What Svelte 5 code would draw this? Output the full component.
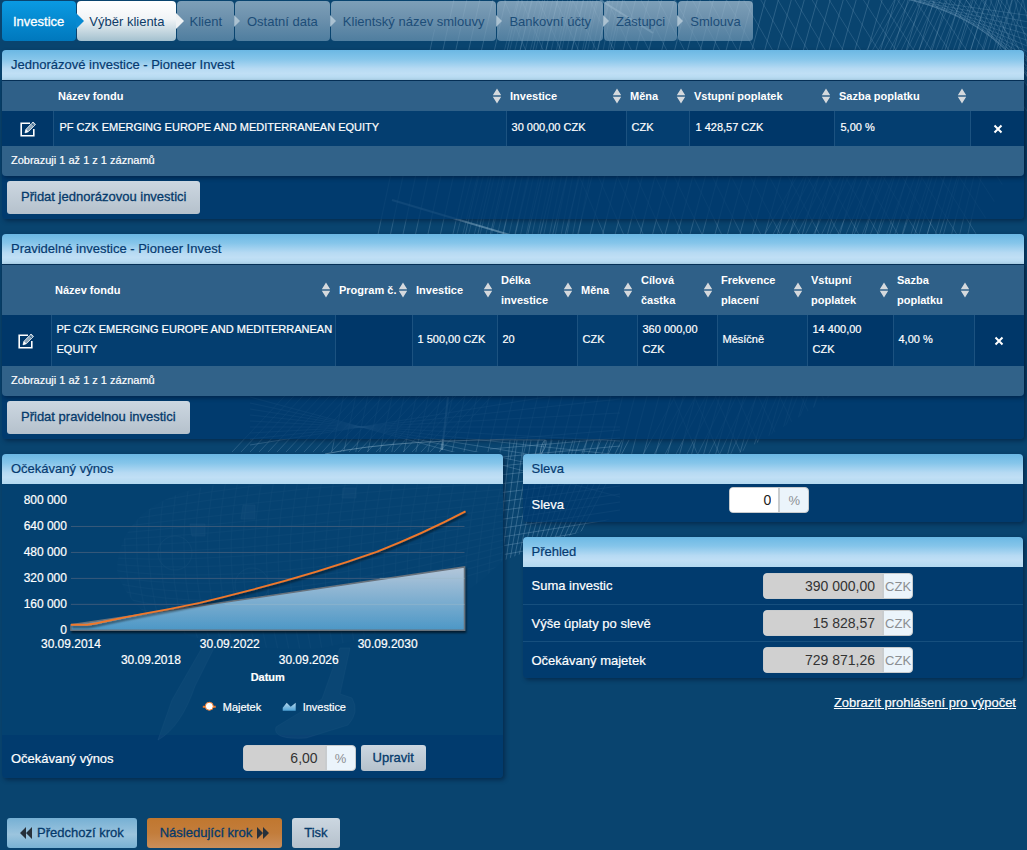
<script>
  const steps = [
    { label: 'Investice', state: 'current' },
    { label: 'Výběr klienta', state: 'next' },
    { label: 'Klient', state: 'idle' },
    { label: 'Ostatní data', state: 'idle' },
    { label: 'Klientský název smlouvy', state: 'idle' },
    { label: 'Bankovní účty', state: 'idle' },
    { label: 'Zástupci', state: 'idle' },
    { label: 'Smlouva', state: 'idle' }
  ];

  const tables = [
    {
      title: 'Jednorázové investice - Pioneer Invest',
      add: 'Přidat jednorázovou investici',
      widths: [52, 452, 120, 64, 145, 136, 53],
      heads: ['Název fondu', 'Investice', 'Měna', 'Vstupní poplatek', 'Sazba poplatku'],
      cells: ['PF CZK EMERGING EUROPE AND MEDITERRANEAN EQUITY', '30 000,00 CZK', 'CZK', '1 428,57 CZK', '5,00 %'],
      tall: false
    },
    {
      title: 'Pravidelné investice - Pioneer Invest',
      add: 'Přidat pravidelnou investici',
      widths: [49, 284, 77, 85, 80, 60, 80, 90, 86, 81, 50],
      heads: ['Název fondu', 'Program č.', 'Investice', 'Délka investice', 'Měna', 'Cílová častka', 'Frekvence placení', 'Vstupní poplatek', 'Sazba poplatku'],
      cells: ['PF CZK EMERGING EUROPE AND MEDITERRANEAN EQUITY', '', '1 500,00 CZK', '20', 'CZK', '360 000,00\nCZK', 'Měsíčně', '14 400,00\nCZK', '4,00 %'],
      tall: true
    }
  ];

  const summary = [
    { id: 'sum', label: 'Suma investic', value: '390 000,00' },
    { id: 'fee', label: 'Výše úplaty po slevě', value: '15 828,57' },
    { id: 'wealth', label: 'Očekávaný majetek', value: '729 871,26' }
  ];

  const yTicks = ['800 000', '640 000', '480 000', '320 000', '160 000', '0'];
  const xTicks = [
    [71, 648, '30.09.2014'],
    [151, 664, '30.09.2018'],
    [230, 648, '30.09.2022'],
    [309, 664, '30.09.2026'],
    [388, 648, '30.09.2030']
  ];

  // Wireframe decoration behind the panels
  const line = (a, b, c, d) => `M${a} ${b}L${c} ${d}`;
  const fan = (n, f) => Array.from({ length: n }, (_, i) => f(i)).join('');
  const steep = fan(46, (i) => line(430 + i * 13, -10, 330 + i * 12, 460));
  const falling = fan(34, (i) => line(500 + i * 17, -10, 700 + i * 22, 460));
  const sweep = fan(26, (i) => line(900 + i * 5, -10, 640 + i * 11, 460));
  const dense = fan(22, (i) => line(520 + i * 5, -10, 440 + i * 6, 300));
  const rightFan = fan(22, (i) => line(850 + i * 9, -10, 1060, 20 + i * 8));
  const lower = fan(24, (i) => line(300 + i * 9, 380, 215 + i * 9, 470));
  const lowerFlat = fan(9, (i) => line(250, 445 - i * 6, 620, 385 + i * 14));
  const cowl = fan(18, (i) => line(510 + i * 7, 440, 498 + i * 4, 560)) +
    fan(14, (i) => line(490, 440 + i * 9, 620, 430 + i * 8));
  const ribs = fan(34, (i) => `M${120 + i * 12} 470Q${100 + i * 12} 560 ${135 + i * 11} 650`) +
    fan(16, (i) => `M110 ${600 - i * 6}Q${240 + i * 4} ${650 - i * 12} 520 ${560 - i * 6}`);
</script>

{#snippet editIcon()}
  <svg width="18" height="18" viewBox="0 0 18 18" aria-hidden="true">
    <path d="M11 3.200H2.200V15.800H14.800V9" fill="none" stroke="#fff" stroke-width="1.600" />
    <path d="M6 12.800l1-3.500 7-7.300 2.500 2.400-7.100 7.300z" fill="#8fa8bc" stroke="#e4ebf0" stroke-width=".9" />
    <path d="M6 12.800l1-3.500 2.400 2.400z" fill="#fff" />
    <path d="M12.600 3.400l2.500 2.400" stroke="#073f70" stroke-width=".9" />
  </svg>
{/snippet}

{#snippet sortIcon()}
  <svg class="sort" width="10" height="16" viewBox="0 0 10 16" aria-hidden="true">
    <path d="M5 .500l4.200 6.700H.8zM5 15.500L.8 8.800h8.400z" fill="#d5d9dd" />
  </svg>
{/snippet}

<div class="page">
  <svg class="wire" viewBox="0 0 1027 850" preserveAspectRatio="xMidYMin slice" aria-hidden="true">
    <defs>
      <clipPath id="hull"><path d="M450 0H1027V110Q995 260 830 396Q740 460 590 528L505 560L500 452H225Q245 400 330 230Z" /></clipPath>
      <clipPath id="body"><path d="M117 570Q120 490 250 480H503V560Q440 625 320 648Q140 655 117 570Z" /></clipPath>
    </defs>
    <g clip-path="url(#hull)" fill="none" stroke="#8db4cf" stroke-width=".7">
      <path d={steep} opacity=".38" />
      <path d={falling} opacity=".3" />
      <path d={sweep} opacity=".3" />
      <path d={dense} opacity=".26" />
      <path d={rightFan} opacity=".3" />
      <path d={lower} opacity=".36" />
      <path d={lowerFlat} opacity=".4" />
      <path d={cowl} opacity=".45" />
    </g>
    <g fill="none" stroke="#9dc0d6" opacity=".45">
      <path d="M392 200L530 241M600 0L653 33M442 450L448 397" stroke-width="2" />
      <path d="M325 454Q400 438 545 440M540 454q2-14 6-14q1 6-5 14" />
    </g>
    <g clip-path="url(#body)">
      <path d="M100 470H510V660H100Z" fill="#b6d3e2" opacity=".06" />
      <path d={ribs} fill="none" stroke="#a2c4d8" opacity=".25" />
    </g>
    <g fill="#b6d3e2" fill-opacity=".24" stroke="#a2c4d8" stroke-opacity=".3">
      <circle cx="175" cy="553" r="17" fill="none" />
      <circle cx="252" cy="585" r="17" fill="none" />
      <path d="M203 646L172 700 158 740Q181 727 195 686L214 648ZM340 648L322 699 276 727Q272 740 306 738L348 725Q360 712 352 698L340 694 350 648Z" />
      <path d="M243 505h12v14h-14zM190 524h15v12h-13zM343 488h13v10h-14z" />
    </g>
  </svg>

  <nav aria-label="Kroky">
    {#each steps as step}
      <a href="#krok" class="step {step.state}" aria-current={step.state === 'current' ? 'step' : undefined}>{step.label}</a>
    {/each}
  </nav>

  <main>
    {#each tables as t}
      <section class="panel">
        <h2>{t.title}</h2>
        <div class="grid-box">
          <table class:tall={t.tall}>
            <colgroup>
              {#each t.widths as w}<col style="width:{w / 10.22}%" />{/each}
            </colgroup>
            <thead>
              <tr>
                <th></th>
                {#each t.heads as h}
                  <th><button class="head"><span>{h}</span>{@render sortIcon()}</button></th>
                {/each}
                <th></th>
              </tr>
            </thead>
            <tbody>
              <tr>
                <td class="act"><button class="icon" aria-label="Upravit">{@render editIcon()}</button></td>
                {#each t.cells as c}<td>{c}</td>{/each}
                <td class="act">
                  <button class="icon" aria-label="Smazat">
                    <svg width="10" height="10" viewBox="0 0 10 10" aria-hidden="true"><path d="M1.500 1.500l7 7m0-7l-7 7" stroke="#fff" stroke-width="2" /></svg>
                  </button>
                </td>
              </tr>
            </tbody>
          </table>
          <div class="count">Zobrazuji 1 až 1 z 1 záznamů</div>
        </div>
        <div class="add"><button class="btn">{t.add}</button></div>
      </section>
    {/each}

    <div class="columns">
      <section class="panel">
        <h2>Očekávaný výnos</h2>
        <svg class="chart" viewBox="2 484 501 251" role="img" aria-label="Očekávaný výnos">
          <defs>
            <linearGradient id="area" x1="0" y1="0" x2="0" y2="1">
              <stop offset="0" stop-color="#b4c7da" /><stop offset="1" stop-color="#4c97c6" />
            </linearGradient>
            <linearGradient id="mini" x1="0" y1="0" x2="0" y2="1">
              <stop offset="0" stop-color="#b7d7ec" /><stop offset="1" stop-color="#4fa3d6" />
            </linearGradient>
            <filter id="shade" x="-5%" y="-10%" width="110%" height="125%">
              <feDropShadow dx="1" dy="2" stdDeviation="1" flood-color="#000" flood-opacity=".6" />
            </filter>
          </defs>
          {#each yTicks as t, i}
            <text x="67" y={504 + i * 26} text-anchor="end">{t}</text>
          {/each}
          <path d="M71 526.500H465M71 552.500H465M71 578.500H465M71 604.500H465" stroke="#39597a" />
          <path d="M71 625L465 567V630.500H71Z" fill="url(#area)" stroke="#68727c" stroke-width="1.500" filter="url(#shade)" />
          <path d="M380 578.500H465M225 604.500H465" stroke="#9db9ca" opacity=".5" />
          <path d="M71 625H84C92 625 100 622 143 614Q172 609 200 603Q225 597 250 590.500Q318 573 377 552Q423 534 466 511.500" fill="none" stroke="#f0782c" stroke-width="2" filter="url(#shade)" />
          {#each xTicks as [x, y, t]}
            <text {x} {y} text-anchor="middle">{t}</text>
          {/each}
          <g class="small">
            <text x="268" y="681" text-anchor="middle" font-weight="bold">Datum</text>
            <path d="M203 707H216" stroke="#f0782c" stroke-width="2" />
            <circle cx="209.500" cy="706.500" r="4" fill="#fff" stroke="#f0782c" />
            <text x="223" y="711">Majetek</text>
            <path d="M283 711V708l4-5 4 4 5-4V711Z" fill="url(#mini)" />
            <text x="303" y="711">Investice</text>
          </g>
        </svg>
        <div class="row yield">
          <label for="yield">Očekávaný výnos</label>
          <span class="field w-yield"><input id="yield" value="6,00" readonly /><span class="unit">%</span></span>
          <button class="btn compact">Upravit</button>
        </div>
      </section>

      <div class="side">
        <section class="panel">
          <h2>Sleva</h2>
          <div class="row discount">
            <label for="discount">Sleva</label>
            <span class="field w-discount"><input id="discount" value="0" /><span class="unit">%</span></span>
          </div>
        </section>
        <section class="panel">
          <h2>Přehled</h2>
          {#each summary as s}
            <div class="row line">
              <label for={s.id}>{s.label}</label>
              <span class="field w-sum"><input id={s.id} value={s.value} readonly /><span class="unit">CZK</span></span>
            </div>
          {/each}
        </section>
        <a class="note" href="#prohlaseni">Zobrazit prohlášení pro výpočet</a>
      </div>
    </div>

    <footer>
      <button class="btn prev">
        <svg width="12" height="12" viewBox="0 0 12 12" aria-hidden="true"><path d="M6 0v12L0 6zM12 0v12L6 6z" fill="#26303a" /></svg>
        Předchozí krok
      </button>
      <button class="btn go">
        Následující krok
        <svg width="12" height="12" viewBox="0 0 12 12" aria-hidden="true"><path d="M0 0l6 6-6 6zM6 0l6 6-6 6z" fill="#26303a" /></svg>
      </button>
      <button class="btn">Tisk</button>
    </footer>
  </main>
</div>

<style>
  :global(body) { background: #09446f; overflow-x: hidden; }
  .page, .page button, .page input { font-family: "Liberation Sans", Arial, sans-serif; }
  .page { position: relative; box-sizing: border-box; padding: 1px 3px 2px 2px; font-size: 13px; color: #fff; overflow: hidden; }
  .page * { box-sizing: border-box; }
  .wire { position: absolute; inset: 0; width: 100%; height: 850px; }
  nav, main { position: relative; }
  button { margin: 0; border: 0; background: none; color: inherit; cursor: pointer; }

  nav { display: flex; gap: 1px; }
  .step { position: relative; height: 40px; padding: 0 12px 0 11px; line-height: 41px; border-radius: 4px; text-decoration: none; white-space: nowrap; color: #1c4d78; background: linear-gradient(rgba(170, 194, 212, .72), rgba(146, 174, 196, .72) 45%, rgba(106, 148, 178, .72)); }
  .step.current { color: #fff; background: linear-gradient(#0a9ae2, #0078bd); -webkit-text-stroke: .3px #fff; }
  .step.next { color: #0d3c68; background: linear-gradient(#fff, #f1f4f6 45%, #a4c1cf); }
  .step + .step { padding-left: 12px; }
  .step:not(:last-child)::after { content: ""; position: absolute; z-index: 1; left: 100%; top: 14px; border: 6px solid transparent; border-left-color: rgba(188, 206, 219, .8); border-right: 0; }
  .step.current::after { border-left-color: #0789d1; top: 12px; border-width: 8px 0 8px 8px; }
  .step.next::after { border-left-color: #eef2f4; top: 12px; border-width: 8px 0 8px 8px; }

  main { display: flex; flex-direction: column; gap: 15px; margin-top: 9px; }
  .panel { border-radius: 4px; background: rgba(0, 58, 110, .8); box-shadow: 2px 2px 4px rgba(0, 20, 45, .5); }
  h2 { margin: 0; padding: 0 9px; height: 30px; line-height: 30px; font-size: 13px; font-weight: normal; color: #053a70; border-radius: 4px 4px 0 0; background: linear-gradient(#6bb8e4, #85c5ea 30%, #b6daf3 62%, #c0dff5 78%, #b3d9f0); -webkit-text-stroke: .2px; }
  .grid-box { border-top: 1px solid #052f55; border-radius: 0 0 4px 4px; box-shadow: 1px 2px 4px rgba(0, 20, 45, .5); overflow: hidden; }
  table { width: 100%; table-layout: fixed; border-collapse: collapse; font-size: 11px; line-height: 20px; background: #013b6d; }
  th { height: 30px; padding: 0 4px; text-align: left; background: #2f6088; }
  .tall th { height: 50px; }
  .head { display: flex; justify-content: space-between; align-items: center; width: 100%; padding: 0 0 1px; font-size: 11px; font-weight: bold; line-height: 20px; text-align: left; }
  .sort { flex: none; }
  td { height: 35px; padding: 0 0 4px 5px; border-left: 1px solid #1c5280; background: #003769; white-space: pre-line; -webkit-text-stroke: .2px; }
  td:first-child { border-left: 0; }
  td:nth-child(even) { background: #043e70; }
  .tall td { height: 51px; }
  td.act { padding: 0; text-align: center; line-height: 0; }
  .icon { padding: 0; vertical-align: middle; line-height: 0; }
  .count { height: 30px; padding: 0 9px; font-size: 11px; line-height: 28px; background: #316289; -webkit-text-stroke: .2px; }
  .add { padding: 5px; }
  .btn { height: 33px; padding: 0 12px; border-radius: 3px; font-size: 13px; line-height: 30px; color: #053a6b; -webkit-text-stroke: .3px #053a6b; background: linear-gradient(#ccd7e1, #b5c1cc); white-space: nowrap; }
  .add .btn { display: block; padding: 0 14px 2px; }

  .columns { display: grid; grid-template-columns: 1fr 1fr; gap: 20px; padding-right: 1px; }
  .side { display: flex; flex-direction: column; gap: 15px; }
  .chart { display: block; width: 100%; background: rgba(12, 76, 118, .35); }
  .chart text { font-size: 12px; fill: #fff; stroke: #fff; stroke-width: .2px; }
  .chart .small text { font-size: 11px; }
  .row { display: flex; align-items: center; padding: 0 9px; -webkit-text-stroke: .2px; }
  .yield { height: 43px; padding-top: 4px; border-radius: 0 0 4px 4px; }
  .discount { height: 38px; padding-bottom: 6px; }
  .discount label { padding-top: 8px; }
  .line { height: 37px; }
  .line + .line { border-top: 1px solid #164f7e; }
  .row label { flex: none; width: 48%; }
  .discount label { width: 41%; }
  .field { display: flex; height: 26px; overflow: hidden; border: 1px solid #c8cbcd; border-radius: 4px; background: #ebf4fb; -webkit-text-stroke: 0; }
  .field input { flex: 1; min-width: 0; margin: 0; padding: 0 7px; border: 0; border-right: 2px solid #c9ccce; font-size: 14px; text-align: right; color: #222; background: #fff; outline: 0; }
  .field input[readonly] { background: #d0d0d0; color: #333; }
  .unit { flex: none; width: 28px; line-height: 26px; text-align: center; color: #8b8f93; }
  .w-yield { width: 113px; margin-right: 5px; }
  .w-discount { width: 80px; }
  .w-sum { width: 150px; }
  .compact { height: 26px; line-height: 26px; }
  .note { align-self: flex-end; margin: 0 7px; padding-top: 1px; line-height: 18px; color: #fff; -webkit-text-stroke: .2px; }

  footer { display: flex; gap: 10px; margin-top: 25px; padding-left: 5px; }
  footer .btn { height: 30px; display: flex; align-items: center; gap: 5px; }
  footer .prev, footer .go { padding: 0 13px; }
  .prev { background: linear-gradient(#76b0d4, #9bc4de 55%, #79b2d3); }
  .go { background: linear-gradient(#c0772f, #c37d3b 50%, #c98e5b); }
</style>
